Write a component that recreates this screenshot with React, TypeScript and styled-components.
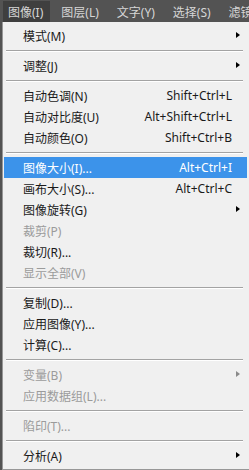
import React from "react";
import styled, { createGlobalStyle } from "styled-components";

const GlobalStyle = createGlobalStyle`
  html, body {
    margin: 0;
    padding: 0;
    background: #535353;
    overflow: hidden;
  }
  body {
    font-family: "Noto Sans", "Noto Sans CJK SC", sans-serif;
    font-size: 12px;
  }
`;

type Item = {
  label: string;
  shortcut?: string;
  sub?: boolean;
  disabled?: boolean;
  active?: boolean;
  sep?: boolean;
};

const items: Item[] = [
  { label: "模式(M)", sub: true },
  { label: "", sep: true },
  { label: "调整(J)", sub: true },
  { label: "", sep: true },
  { label: "自动色调(N)", shortcut: "Shift+Ctrl+L" },
  { label: "自动对比度(U)", shortcut: "Alt+Shift+Ctrl+L" },
  { label: "自动颜色(O)", shortcut: "Shift+Ctrl+B" },
  { label: "", sep: true },
  { label: "图像大小(I)...", shortcut: "Alt+Ctrl+I", active: true },
  { label: "画布大小(S)...", shortcut: "Alt+Ctrl+C" },
  { label: "图像旋转(G)", sub: true },
  { label: "裁剪(P)", disabled: true },
  { label: "裁切(R)..." },
  { label: "显示全部(V)", disabled: true },
  { label: "", sep: true },
  { label: "复制(D)..." },
  { label: "应用图像(Y)..." },
  { label: "计算(C)..." },
  { label: "", sep: true },
  { label: "变量(B)", sub: true, disabled: true },
  { label: "应用数据组(L)...", disabled: true },
  { label: "", sep: true },
  { label: "陷印(T)...", disabled: true },
  { label: "", sep: true },
  { label: "分析(A)", sub: true },
];

const MenuBar = styled.div`
  display: flex;
  height: 22px;
  padding: 1px 0 0 3px;
  box-sizing: border-box;
  background: #535353;
  overflow: hidden;
`;

const BarItem = styled.div<{ $open?: boolean }>`
  display: flex;
  align-items: center;
  flex-shrink: 0;
  height: 21px;
  padding: 0 7px 0 5px;
  margin-right: 6px;
  color: #d6d6d6;
  white-space: nowrap;
  background: ${(p) => (p.$open ? "#3f3f3f" : "transparent")};
`;

const Panel = styled.div`
  margin-left: 2px;
  width: 252px;
  padding: 3px 1px;
  background: #f0f0f0;
  border: 1px solid #979797;
  border-top: none;
  box-sizing: border-box;
`;

const Row = styled.div<{ $active?: boolean; $disabled?: boolean }>`
  display: flex;
  align-items: center;
  height: 21px;
  margin-right: 5px;
  padding: 0 15px 0 19px;
  position: relative;
  color: ${(p) => (p.$active ? "#ffffff" : p.$disabled ? "#9b9b9b" : "#1a1a1a")};
  background: ${(p) => (p.$active ? "#3c93ea" : "transparent")};
`;

const Label = styled.span`
  flex: 1;
  white-space: nowrap;
`;

const Shortcut = styled.span`
  white-space: nowrap;
`;

const Arrow = styled.span<{ $disabled?: boolean }>`
  position: absolute;
  right: 7px;
  top: 7px;
  width: 0;
  height: 0;
  border-top: 3.5px solid transparent;
  border-bottom: 3.5px solid transparent;
  border-left: 4px solid ${(p) => (p.$disabled ? "#8a8a8a" : "#000")};
`;

const Separator = styled.div`
  height: 9px;
  display: flex;
  align-items: center;
  padding: 0 4px 0 2px;
  margin-right: 5px;
  &::after {
    content: "";
    flex: 1;
    height: 0;
    border-top: 1px solid #a3a3a3;
    border-bottom: 1px solid #ffffff;
  }
`;

const App = () => {
  return (
    <>
      <GlobalStyle />
      <MenuBar>
        <BarItem $open>图像(I)</BarItem>
        <BarItem>图层(L)</BarItem>
        <BarItem>文字(Y)</BarItem>
        <BarItem>选择(S)</BarItem>
        <BarItem>滤镜</BarItem>
      </MenuBar>
      <Panel>
        {items.map((it, i) =>
          it.sep ? (
            <Separator key={i} />
          ) : (
            <Row key={i} $active={it.active} $disabled={it.disabled}>
              <Label>{it.label}</Label>
              {it.shortcut && <Shortcut>{it.shortcut}</Shortcut>}
              {it.sub && <Arrow $disabled={it.disabled} />}
            </Row>
          )
        )}
      </Panel>
    </>
  );
};

export default App;
